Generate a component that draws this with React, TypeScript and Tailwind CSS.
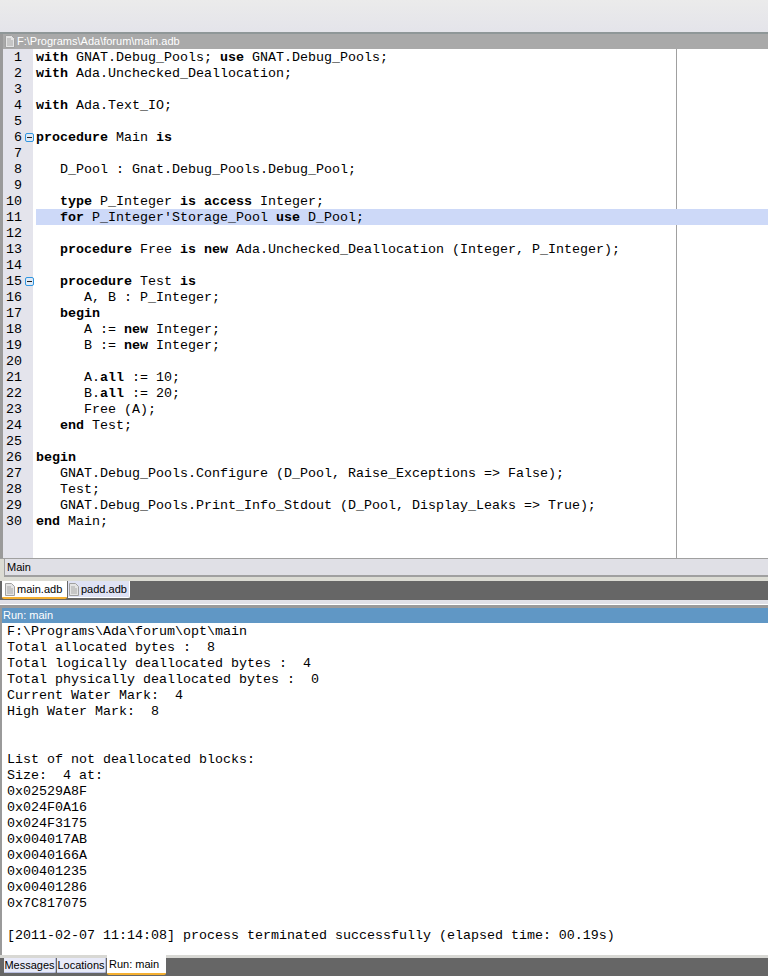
const codeLines: string[] = [
  "**with** GNAT.Debug_Pools; **use** GNAT.Debug_Pools;",
  "**with** Ada.Unchecked_Deallocation;",
  "",
  "**with** Ada.Text_IO;",
  "",
  "**procedure** Main **is**",
  "",
  "   D_Pool : Gnat.Debug_Pools.Debug_Pool;",
  "",
  "   **type** P_Integer **is** **access** Integer;",
  "   **for** P_Integer'Storage_Pool **use** D_Pool;",
  "",
  "   **procedure** Free **is** **new** Ada.Unchecked_Deallocation (Integer, P_Integer);",
  "",
  "   **procedure** Test **is**",
  "      A, B : P_Integer;",
  "   **begin**",
  "      A := **new** Integer;",
  "      B := **new** Integer;",
  "",
  "      A.**all** := 10;",
  "      B.**all** := 20;",
  "      Free (A);",
  "   **end** Test;",
  "",
  "**begin**",
  "   GNAT.Debug_Pools.Configure (D_Pool, Raise_Exceptions => False);",
  "   Test;",
  "   GNAT.Debug_Pools.Print_Info_Stdout (D_Pool, Display_Leaks => True);",
  "**end** Main;",
];

const runLines = [
  "F:\\Programs\\Ada\\forum\\opt\\main",
  "Total allocated bytes :  8",
  "Total logically deallocated bytes :  4",
  "Total physically deallocated bytes :  0",
  "Current Water Mark:  4",
  "High Water Mark:  8",
  "",
  "",
  "List of not deallocated blocks:",
  "Size:  4 at:",
  "0x02529A8F",
  "0x024F0A16",
  "0x024F3175",
  "0x004017AB",
  "0x0040166A",
  "0x00401235",
  "0x00401286",
  "0x7C817075",
  "",
  "[2011-02-07 11:14:08] process terminated successfully (elapsed time: 00.19s)",
];

function FileIcon() {
  return (
    <svg width="10" height="13" viewBox="0 0 10 13" className="shrink-0">
      <path d="M0.5 0.5H6.5L9.5 3.5V12.5H0.5Z" fill="#e4e4e4" stroke="#a0a0a0" />
      <path d="M2 4H6M2 6H8M2 8H8M2 10H8" stroke="#a8a8a8" />
    </svg>
  );
}

function Fold() {
  return (
    <span className="absolute left-[22px] top-[4px] flex h-[9px] w-[9px] items-center justify-center rounded-[2px] border border-[#2f95e0] bg-[#dfe9f6]">
      <span className="h-px w-[5px] bg-[#222]" />
    </span>
  );
}

function CodeLine({ text }: { text: string }) {
  const parts = text.split("**");
  return (
    <>
      {parts.map((p, i) =>
        i % 2 === 1 ? (
          <b key={i} className="font-bold">
            {p}
          </b>
        ) : (
          <span key={i}>{p}</span>
        )
      )}
    </>
  );
}

export default function App() {
  return (
    <div className="flex h-[976px] w-[768px] flex-col overflow-hidden bg-[#9a9a9a] font-['Liberation_Sans',sans-serif] text-[11px] text-black">
      <div className="h-[34px] shrink-0 border-b-2 border-[#8f9798] bg-gradient-to-b from-[#ebebeb] to-[#e4e4ea]" />

      <div className="flex h-[525px] shrink-0 flex-col border-b border-[#a0a0a0] pl-[3px]">
        <div className="flex h-[15px] shrink-0 items-center gap-[1px] bg-[#a9a9a9] pl-[2px] text-white">
          <FileIcon />
          <span className="pl-[1px]">F:\Programs\Ada\forum\main.adb</span>
        </div>
        <div className="relative flex-1 overflow-hidden bg-white font-['Liberation_Mono',monospace] text-[13.33px] leading-[18px]">
          <div className="flex h-full">
            <div className="w-[30px] shrink-0 bg-[#e4e4ec]" />
            <div className="w-[644px] shrink-0 border-r border-[#a0a0a0]" />
          </div>
          <div className="absolute inset-x-0 top-0">
            {codeLines.map((line, i) => (
              <div key={i} className="relative flex h-[16px] whitespace-pre">
                {i === 10 && <span className="absolute inset-y-0 left-[33px] right-0 bg-[#cdd9f8]" />}
                <span className="relative w-[19px] shrink-0 text-right">{i + 1}</span>
                {(i === 5 || i === 14) && <Fold />}
                <span className="relative ml-[14px]">
                  <CodeLine text={line} />
                </span>
              </div>
            ))}
          </div>
        </div>
      </div>

      <div className="h-[22px] shrink-0 bg-[#dcdcd4] pl-[4px]">
        <div className="flex h-[18px] items-center border-b-2 border-l border-[#a0a0a0] bg-[#e0e0e6] pl-[2px]">Main</div>
      </div>

      <div className="flex h-[19px] shrink-0 items-start gap-[1px] bg-[#666666] pl-[2px]">
        <div className="flex h-[18px] w-[65px] items-center gap-[2px] rounded-b-[2px] border-b-2 border-[#f5b031] bg-white pl-[3px]">
          <FileIcon />
          <span>main.adb</span>
        </div>
        <div className="flex h-[17px] w-[62px] items-center gap-[2px] rounded-br-[2px] border-r border-b border-white bg-[#dfe2f4] pl-[1px]">
          <FileIcon />
          <span>padd.adb</span>
        </div>
      </div>

      <div className="h-[8px] shrink-0 border-b-[3px] border-[#9a9a9a] bg-[#e0e0e6]">
        <div className="mt-[4px] h-px bg-white" />
      </div>

      <div className="flex min-h-0 flex-1 flex-col pl-[2px]">
        <div className="flex h-[15px] shrink-0 items-center bg-[#6097c5] pl-[1px] text-white">Run: main</div>
        <div className="flex-1 bg-white pl-[5px] font-['Liberation_Mono',monospace] text-[13.33px] leading-[18px]">
          {runLines.map((line, i) => (
            <div key={i} className="h-[16px] whitespace-pre">
              {line}
            </div>
          ))}
        </div>
      </div>

      <div className="flex h-[21px] shrink-0 items-start border-t-[3px] border-[#d8d8d4] bg-[#666666] pl-[4px]">
        <div className="flex h-[15px] w-[52px] items-center justify-center rounded-br-[2px] border-r border-b border-[#b8bee0] bg-[#e8eaf8]">Messages</div>
        <div className="ml-[1px] flex h-[15px] w-[49px] items-center justify-center rounded-br-[2px] border-r border-b border-[#b8bee0] bg-[#e8eaf8]">Locations</div>
        <div className="-mt-[3px] ml-[1px] flex h-[20px] w-[59px] items-center rounded-b-[2px] border-b-2 border-[#f5b031] bg-white pl-[2px]">Run: main</div>
      </div>
    </div>
  );
}
